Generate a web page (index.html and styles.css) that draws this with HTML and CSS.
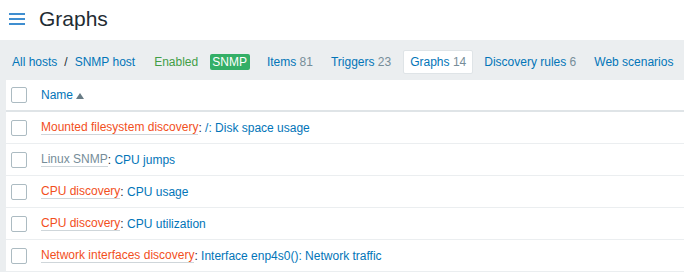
FILE: index.html
```html
<!DOCTYPE html>
<html lang="en">
<head>
    <meta charset="UTF-8">
    <title>Graphs</title>
    <link rel="stylesheet" href="styles.css">
</head>
<body>
<header class="head">
    <span class="burger"><i></i><i></i><i></i></span>
    <h1>Graphs</h1>
</header>
<nav class="tabs">
    <a href="javascript:;" class="link">All hosts</a>
    <span class="sep">/</span>
    <a href="javascript:;" class="link">SNMP host</a>
    <span class="enabled">Enabled</span>
    <span class="badge">SNMP</span>
    <a href="javascript:;" class="tab">Items <em>81</em></a>
    <a href="javascript:;" class="tab">Triggers <em>23</em></a>
    <a href="javascript:;" class="tab active">Graphs <em>14</em></a>
    <a href="javascript:;" class="tab">Discovery rules <em>6</em></a>
    <a href="javascript:;" class="tab">Web scenarios</a>
</nav>
<section class="wrap">
    <div class="row thead">
        <span class="check"></span>
        <a href="javascript:;" class="link">Name</a><span class="arrow"></span>
    </div>
    <div class="row">
        <span class="check"></span>
        <a href="javascript:;" class="alt">Mounted filesystem discovery</a>:&nbsp;<a href="javascript:;" class="link">/: Disk space usage</a>
    </div>
    <div class="row">
        <span class="check"></span>
        <a href="javascript:;" class="alt grey">Linux SNMP</a>:&nbsp;<a href="javascript:;" class="link">CPU jumps</a>
    </div>
    <div class="row">
        <span class="check"></span>
        <a href="javascript:;" class="alt">CPU discovery</a>:&nbsp;<a href="javascript:;" class="link">CPU usage</a>
    </div>
    <div class="row">
        <span class="check"></span>
        <a href="javascript:;" class="alt">CPU discovery</a>:&nbsp;<a href="javascript:;" class="link">CPU utilization</a>
    </div>
    <div class="row">
        <span class="check"></span>
        <a href="javascript:;" class="alt">Network interfaces discovery</a>:&nbsp;<a href="javascript:;" class="link">Interface enp4s0(): Network traffic</a>
    </div>
</section>
</body>
</html>
```

FILE: styles.css
```css
body {
    margin: 0;
    font: 12px "Liberation Sans", Arial, sans-serif;
    color: #1f2c33;
    background: #ebeef0;
}
a {
    text-decoration: none;
}
.head {
    display: flex;
    align-items: center;
    height: 40px;
    background: #fff;
}
.burger {
    display: flex;
    flex-direction: column;
    gap: 3px;
    width: 16px;
    margin: 0 14px 2px 9px;
}
.burger i {
    display: block;
    height: 2px;
    background: #3f8ed0;
}
.head h1 {
    margin: 0 0 2px;
    font-size: 21px;
    font-weight: normal;
    color: #1f2c33;
}
.tabs {
    display: flex;
    align-items: center;
    height: 36px;
    padding: 4px 0 0 12px;
    white-space: nowrap;
}
.link {
    color: #0275b8;
}
.sep {
    margin: 0 7px 0 7px;
    color: #1f2c33;
}
.enabled {
    margin-left: 19px;
    color: #429e47;
}
.badge {
    margin-left: 12px;
    padding: 1px 3px 1px 2px;
    line-height: 14px;
    color: #fff;
    background: #34af67;
    border-radius: 2px;
}
.tab {
    margin-left: 6px;
    padding: 4px 6px;
    line-height: 14px;
    color: #0275b8;
    border-radius: 2px;
}
.badge + .tab {
    margin-left: 11px;
}
.tab em {
    font-style: normal;
    color: #768d99;
}
.tab.active {
    margin-right: -1px;
    background: #fff;
    border: 1px solid #dfe4e7;
}
.wrap {
    margin-left: 6px;
    background: #fff;
}
.row {
    display: flex;
    align-items: center;
    height: 31px;
    border-bottom: 1px solid #ebeef0;
    white-space: nowrap;
}
.thead {
    height: 30px;
    border-bottom: 2px solid #dfe4e7;
}
.check {
    width: 14px;
    height: 14px;
    margin: 0 14px 0 5px;
    border: 1px solid #acbbc2;
    border-radius: 2px;
    background: #fff;
}
.arrow {
    margin: 1px 0 0 3px;
    border: 4px solid transparent;
    border-top: 0;
    border-bottom: 6px solid #687b85;
}
.alt {
    color: #f24f1d;
    border-bottom: 1px solid #cfd6da;
    line-height: 14px;
}
.alt.grey {
    color: #768d99;
}
```
